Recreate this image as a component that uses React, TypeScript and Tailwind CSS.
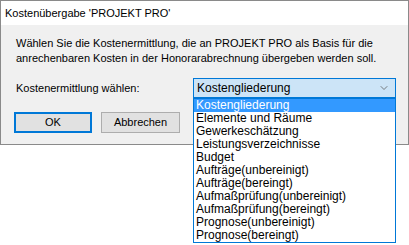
import { ChevronDown } from 'lucide-react';

const options = [
	'Kostengliederung',
	'Elemente und Räume',
	'Gewerkeschätzung',
	'Leistungsverzeichnisse',
	'Budget',
	'Aufträge(unbereinigt)',
	'Aufträge(bereingt)',
	'Aufmaßprüfung(unbereinigt)',
	'Aufmaßprüfung(bereingt)',
	'Prognose(unbereinigt)',
	'Prognose(bereingt)',
];

export default function App() {
	return (
		<div
			className="relative h-[245px] w-[409px] overflow-hidden bg-white text-[11px] text-black"
			style={{ fontFamily: '"Liberation Sans", Arial, sans-serif' }}
		>
			{/* dialog window */}
			<div className="flex h-[145px] w-[409px] flex-col border border-[#8a8a8a]">
				<div className="flex h-[24px] items-center bg-white pl-[4px] text-[11px] leading-[15px]">
					Kostenübergabe 'PROJEKT PRO'
				</div>
				<div className="flex flex-1 flex-col bg-[#f0f0f0] pl-[15px] pt-[11px]">
					<p className="whitespace-nowrap leading-[15px]">
						Wählen Sie die Kostenermittlung, die an PROJEKT PRO als Basis für die
						<br />
						anrechenbaren Kosten in der Honorarabrechnung übergeben werden soll.
					</p>
					<div className="mt-[12px] flex h-[20px] items-center">
						<span className="w-[177px]">Kostenermittlung wählen:</span>
						<div className="flex h-[20px] w-[203px] items-center justify-between border border-[#0078d7] bg-[#cce4f7] pl-[3px] pr-[5px] text-[12px]">
							<span>Kostengliederung</span>
							<ChevronDown className="h-[12px] w-[12px] text-[#555]" strokeWidth={1.5} />
						</div>
					</div>
					<div className="ml-[-2px] mt-[14px] flex gap-[9px]">
						<button className="flex h-[21px] w-[78px] items-center justify-center border-2 border-[#0078d7] bg-[#e1e1e1]">
							OK
						</button>
						<button className="flex h-[21px] w-[79px] items-center justify-center border border-[#adadad] bg-[#e1e1e1]">
							Abbrechen
						</button>
					</div>
				</div>
			</div>

			{/* open dropdown list */}
			<ul className="absolute left-[193px] top-[98px] w-[203px] border border-[#0078d7] bg-white text-[12px]">
				{options.map((o, i) => (
					<li
						key={o}
						className={
							i === 0
								? 'h-[13px] whitespace-nowrap bg-[#3399ff] pl-[2px] leading-[13px] text-white'
								: 'h-[13px] whitespace-nowrap pl-[2px] leading-[13px]'
						}
					>
						{o}
					</li>
				))}
			</ul>
		</div>
	);
}
